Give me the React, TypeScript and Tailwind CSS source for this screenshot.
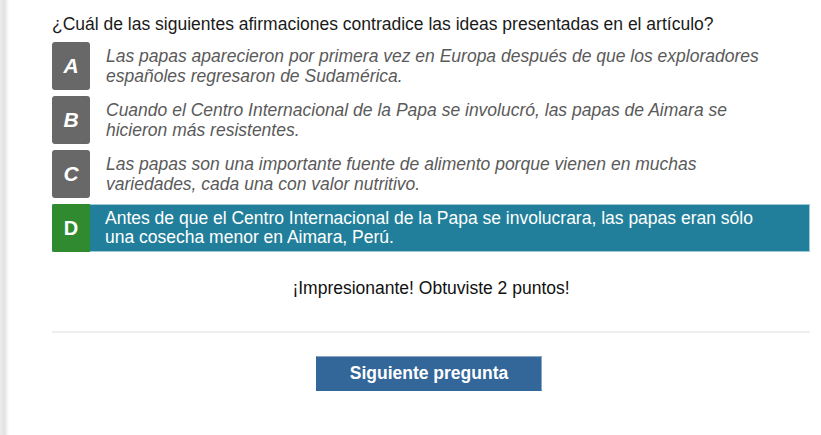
import React from "react";

const options = [
  {
    letter: "A",
    text: "Las papas aparecieron por primera vez en Europa después de que los exploradores españoles regresaron de Sudamérica.",
  },
  {
    letter: "B",
    text: "Cuando el Centro Internacional de la Papa se involucró, las papas de Aimara se hicieron más resistentes.",
  },
  {
    letter: "C",
    text: "Las papas son una importante fuente de alimento porque vienen en muchas variedades, cada una con valor nutritivo.",
  },
  {
    letter: "D",
    text: "Antes de que el Centro Internacional de la Papa se involucrara, las papas eran sólo una cosecha menor en Aimara, Perú.",
    correct: true,
  },
];

export default function App() {
  return (
    <div
      className="flex w-[821px] h-[435px] bg-white overflow-hidden"
      style={{ fontFamily: '"Liberation Sans", Arial, sans-serif' }}
    >
      <div className="w-[9px] shrink-0 bg-gradient-to-r from-[#ececec] via-[#e2e2e2] to-white" />
      <div className="flex-1 pl-[43px] pr-[11px] pt-[14px]">
        <p className="text-[17.5px] leading-[20px] text-[#1a1a1a]">
          ¿Cuál de las siguientes afirmaciones contradice las ideas presentadas en el artículo?
        </p>

        <div className="mt-[8px] flex flex-col gap-[6px]">
          {options.map((opt) =>
            opt.correct ? (
              <div
                key={opt.letter}
                className="flex h-[48px] items-center bg-[#227f9b] border border-[#9cc9d6] border-l-0"
              >
                <div className="w-[38px] h-[48px] -my-px shrink-0 flex items-center justify-center bg-[#2f8a30] rounded-l-[2px] text-white font-bold text-[20px]">
                  {opt.letter}
                </div>
                <p className="pl-[15px] pr-[40px] text-[17.5px] leading-[19px] text-white">
                  {opt.text}
                </p>
              </div>
            ) : (
              <div key={opt.letter} className="flex h-[48px] items-center">
                <div className="w-[38px] h-[48px] shrink-0 flex items-center justify-center bg-[#686868] rounded-[3px] text-white font-bold italic text-[21px]">
                  {opt.letter}
                </div>
                <p className="pl-[16px] pr-[40px] text-[17.5px] leading-[20px] italic text-[#5a5a5a]">
                  {opt.text}
                </p>
              </div>
            )
          )}
        </div>

        <p className="mt-[27px] text-center text-[17.5px] leading-[19px] text-[#111]">
          ¡Impresionante! Obtuviste 2 puntos!
        </p>

        <div className="mt-[33px] h-[2px] bg-[#eeeeee]" />

        <div className="mt-[23px] flex justify-center">
          <button className="w-[226px] h-[35px] bg-[#336699] border border-[#8aa7c4] border-l-[#336699] border-b-[#336699] text-white font-bold text-[17.5px] -ml-[4px]">
            Siguiente pregunta
          </button>
        </div>
      </div>
    </div>
  );
}
